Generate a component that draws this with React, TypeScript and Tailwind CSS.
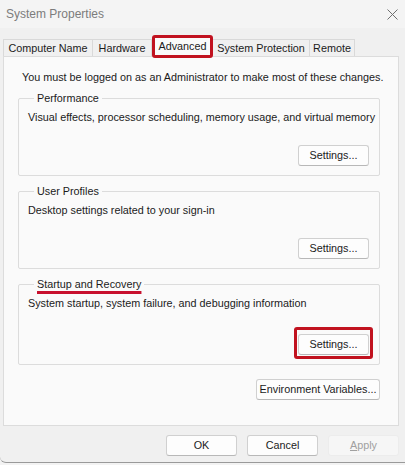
import React from 'react';

const font = { fontFamily: '"Liberation Sans", Arial, sans-serif' };

function Btn({ label, disabled, wide }: { label: string; disabled?: boolean; wide?: boolean }) {
    return (
        <button
            className={
                'h-[21px] whitespace-nowrap rounded-[3px] border text-[10.8px] leading-none ' +
                (wide ? 'w-[124px] ' : 'w-[71px] ') +
                (disabled
                    ? 'border-[#ececec] bg-[#f6f6f6] text-[#a0a0a0]'
                    : 'border-[#d0d0d0] border-b-[#b8b8b8] bg-[#fdfdfd] text-[#1b1b1b]')
            }>
            {label === 'Apply' ? (
                <>
                    <span className="underline">A</span>pply
                </>
            ) : (
                label
            )}
        </button>
    );
}

function Group({ title, text, underline, highlight }: { title: string; text: string; underline?: boolean; highlight?: boolean }) {
    return (
        <fieldset className="min-w-0 rounded-[2px] border border-[#dcdcdc] pb-[9px] pl-[9px] pr-[10px]">
            <legend className="ml-[6px] whitespace-nowrap px-[3px] text-[10.8px] leading-[16px] text-[#1b1b1b]">
                <span className={underline ? 'underline decoration-[#c8102e] decoration-[3px] underline-offset-[3px]' : ''}>
                    {title}
                </span>
            </legend>
            <div className="mt-[3px] whitespace-nowrap text-[10.8px] leading-[16px] text-[#1b1b1b]">{text}</div>
            <div className="mt-[20px] flex justify-end">
                {highlight ? (
                    <div className="-m-[4px] rounded-[3px] border-[3px] border-[#c1121f] p-px">
                        <Btn label="Settings..." />
                    </div>
                ) : (
                    <Btn label="Settings..." />
                )}
            </div>
        </fieldset>
    );
}

export default function App() {
    const tabs = [
        { t: 'Computer Name', w: 'w-[90px]' },
        { t: 'Hardware', w: 'w-[60px]' },
        { t: 'Advanced', w: 'w-[61px]' },
        { t: 'System Protection', w: 'w-[98px]' },
        { t: 'Remote', w: 'w-[46px]' },
    ];

    return (
        <div style={font} className="h-[465px] w-[405px] overflow-hidden bg-[#f3f3f3]">
            <div className="flex h-[463px] flex-col rounded-bl-[6px] border-b border-[#9a9a9a] bg-[#f0f0f0]">
                {/* title bar */}
                <div className="flex h-[28px] items-center justify-between bg-[#f4f4f4] pl-[6px] pr-[7px]">
                    <span className="text-[12px] text-[#7c7c7c]">System Properties</span>
                    <svg width="11" height="11" viewBox="0 0 11 11">
                        <path d="M0.5 0.5 L10.5 10.5 M10.5 0.5 L0.5 10.5" stroke="#6f6f6f" strokeWidth="1" />
                    </svg>
                </div>

                {/* tabs */}
                <div className="mt-[7px] flex items-end pl-[3px]">
                    {tabs.map(({ t, w }) =>
                        t === 'Advanced' ? (
                            <div key={t}
                                className={w + ' relative z-10 mb-[-2px] flex h-[23px] items-start justify-center whitespace-nowrap rounded-[3px] border-[3px] border-[#c1121f] bg-[#fafafa] pt-px text-[10.8px] leading-[14px] text-[#1b1b1b]'}>
                                {t}
                            </div>
                        ) : (
                            <div key={t}
                                className={w + ' -ml-px flex h-[17px] items-center justify-center whitespace-nowrap border border-b-0 border-[#d9d9d9] bg-[#f0f0f0] text-[10.8px] text-[#1b1b1b] first:ml-0'}>
                                {t}
                            </div>
                        )
                    )}
                </div>

                {/* panel */}
                <div className="ml-[3px] mr-[6px] h-[370px] border border-[#dcdcdc] bg-[#fafafa] pl-[14px] pr-[18px] pt-[12px]">
                    <div className="whitespace-nowrap pl-[4px] text-[10.8px] leading-[16px] text-[#1b1b1b]">
                        You must be logged on as an Administrator to make most of these changes.
                    </div>
                    <div className="mt-[5px] flex flex-col gap-[7px]">
                        <Group title="Performance" text="Visual effects, processor scheduling, memory usage, and virtual memory" />
                        <Group title="User Profiles" text="Desktop settings related to your sign-in" />
                        <Group title="Startup and Recovery" text="System startup, system failure, and debugging information" underline highlight />
                    </div>
                    <div className="mt-[14px] flex justify-end">
                        <Btn label="Environment Variables..." wide />
                    </div>
                </div>

                {/* bottom buttons */}
                <div className="mt-[9px] flex justify-end gap-[10px] pr-[6px]">
                    <Btn label="OK" />
                    <Btn label="Cancel" />
                    <Btn label="Apply" disabled />
                </div>
            </div>
        </div>
    );
}
